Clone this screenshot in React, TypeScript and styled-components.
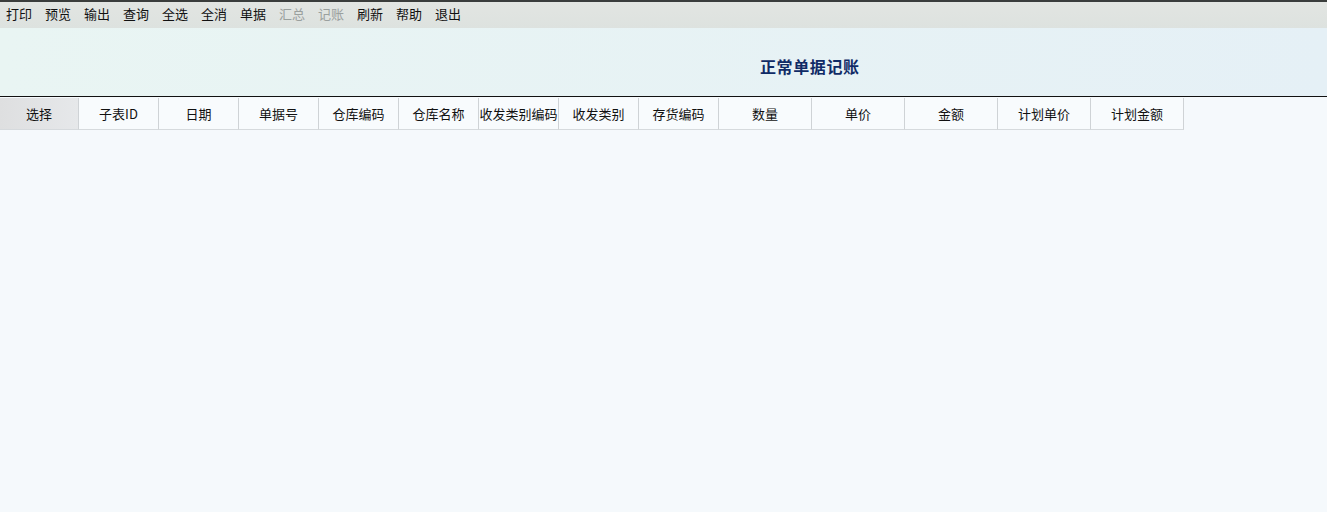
import React from "react";
import styled, { createGlobalStyle } from "styled-components";

const Global = createGlobalStyle`
  html, body { margin: 0; padding: 0; background: #f5f9fc; }
  body { font-family: "SimSun", "Noto Sans CJK SC", "Liberation Sans", sans-serif; font-size: 13px; color: #111; }
`;

const Page = styled.div`
  width: 1327px;
  height: 512px;
  display: flex;
  flex-direction: column;
  background: #f5f9fc;
  overflow: hidden;
`;

const Toolbar = styled.div`
  height: 26px;
  border-top: 2px solid #3a3d3c;
  background: linear-gradient(#e2e5e2, #dde2df);
  display: flex;
  align-items: center;
  padding-left: 6px;
`;

const ToolItem = styled.span<{ $disabled?: boolean }>`
  width: 39px;
  font-size: 13px;
  line-height: 26px;
  margin-top: -2px;
  color: ${(p) => (p.$disabled ? "#9aa09e" : "#111")};
  white-space: nowrap;
`;

const TitleBar = styled.div`
  height: 68px;
  background: linear-gradient(90deg, #e9f5f3, #e5f0f6);
  border-bottom: 1px solid #111;
  display: flex;
  align-items: center;
  padding-left: 760px;
`;

const Title = styled.h1`
  margin: 0;
  margin-top: 8px;
  font-size: 16px;
  font-weight: bold;
  color: #102b66;
  letter-spacing: 0.6px;
`;

const HeaderRow = styled.div`
  display: flex;
  height: 32px;
  margin-top: 1px;
`;

const HeadCell = styled.div<{ $w: number; $first?: boolean }>`
  width: ${(p) => p.$w}px;
  box-sizing: border-box;
  display: flex;
  align-items: center;
  justify-content: center;
  font-size: 13px;
  color: #111;
  background: ${(p) => (p.$first ? "linear-gradient(90deg, #dedfe0, #e6e8ea)" : "#f8fbfd")};
  border-right: 1px solid #cfd3d6;
  border-bottom: 1px solid #d6dadd;
  white-space: nowrap;
`;

const cols: [string, number][] = [
  ["选择", 79],
  ["子表ID", 80],
  ["日期", 80],
  ["单据号", 80],
  ["仓库编码", 80],
  ["仓库名称", 80],
  ["收发类别编码", 80],
  ["收发类别", 80],
  ["存货编码", 80],
  ["数量", 93],
  ["单价", 93],
  ["金额", 93],
  ["计划单价", 93],
  ["计划金额", 93],
];

const tools: [string, boolean][] = [
  ["打印", false],
  ["预览", false],
  ["输出", false],
  ["查询", false],
  ["全选", false],
  ["全消", false],
  ["单据", false],
  ["汇总", true],
  ["记账", true],
  ["刷新", false],
  ["帮助", false],
  ["退出", false],
];

export default function App() {
  return (
    <Page>
      <Global />
      <Toolbar>
        {tools.map(([t, d]) => (
          <ToolItem key={t} $disabled={d}>{t}</ToolItem>
        ))}
      </Toolbar>
      <TitleBar>
        <Title>正常单据记账</Title>
      </TitleBar>
      <HeaderRow>
        {cols.map(([c, w], i) => (
          <HeadCell key={c} $w={w} $first={i === 0}>{c}</HeadCell>
        ))}
      </HeaderRow>
    </Page>
  );
}
